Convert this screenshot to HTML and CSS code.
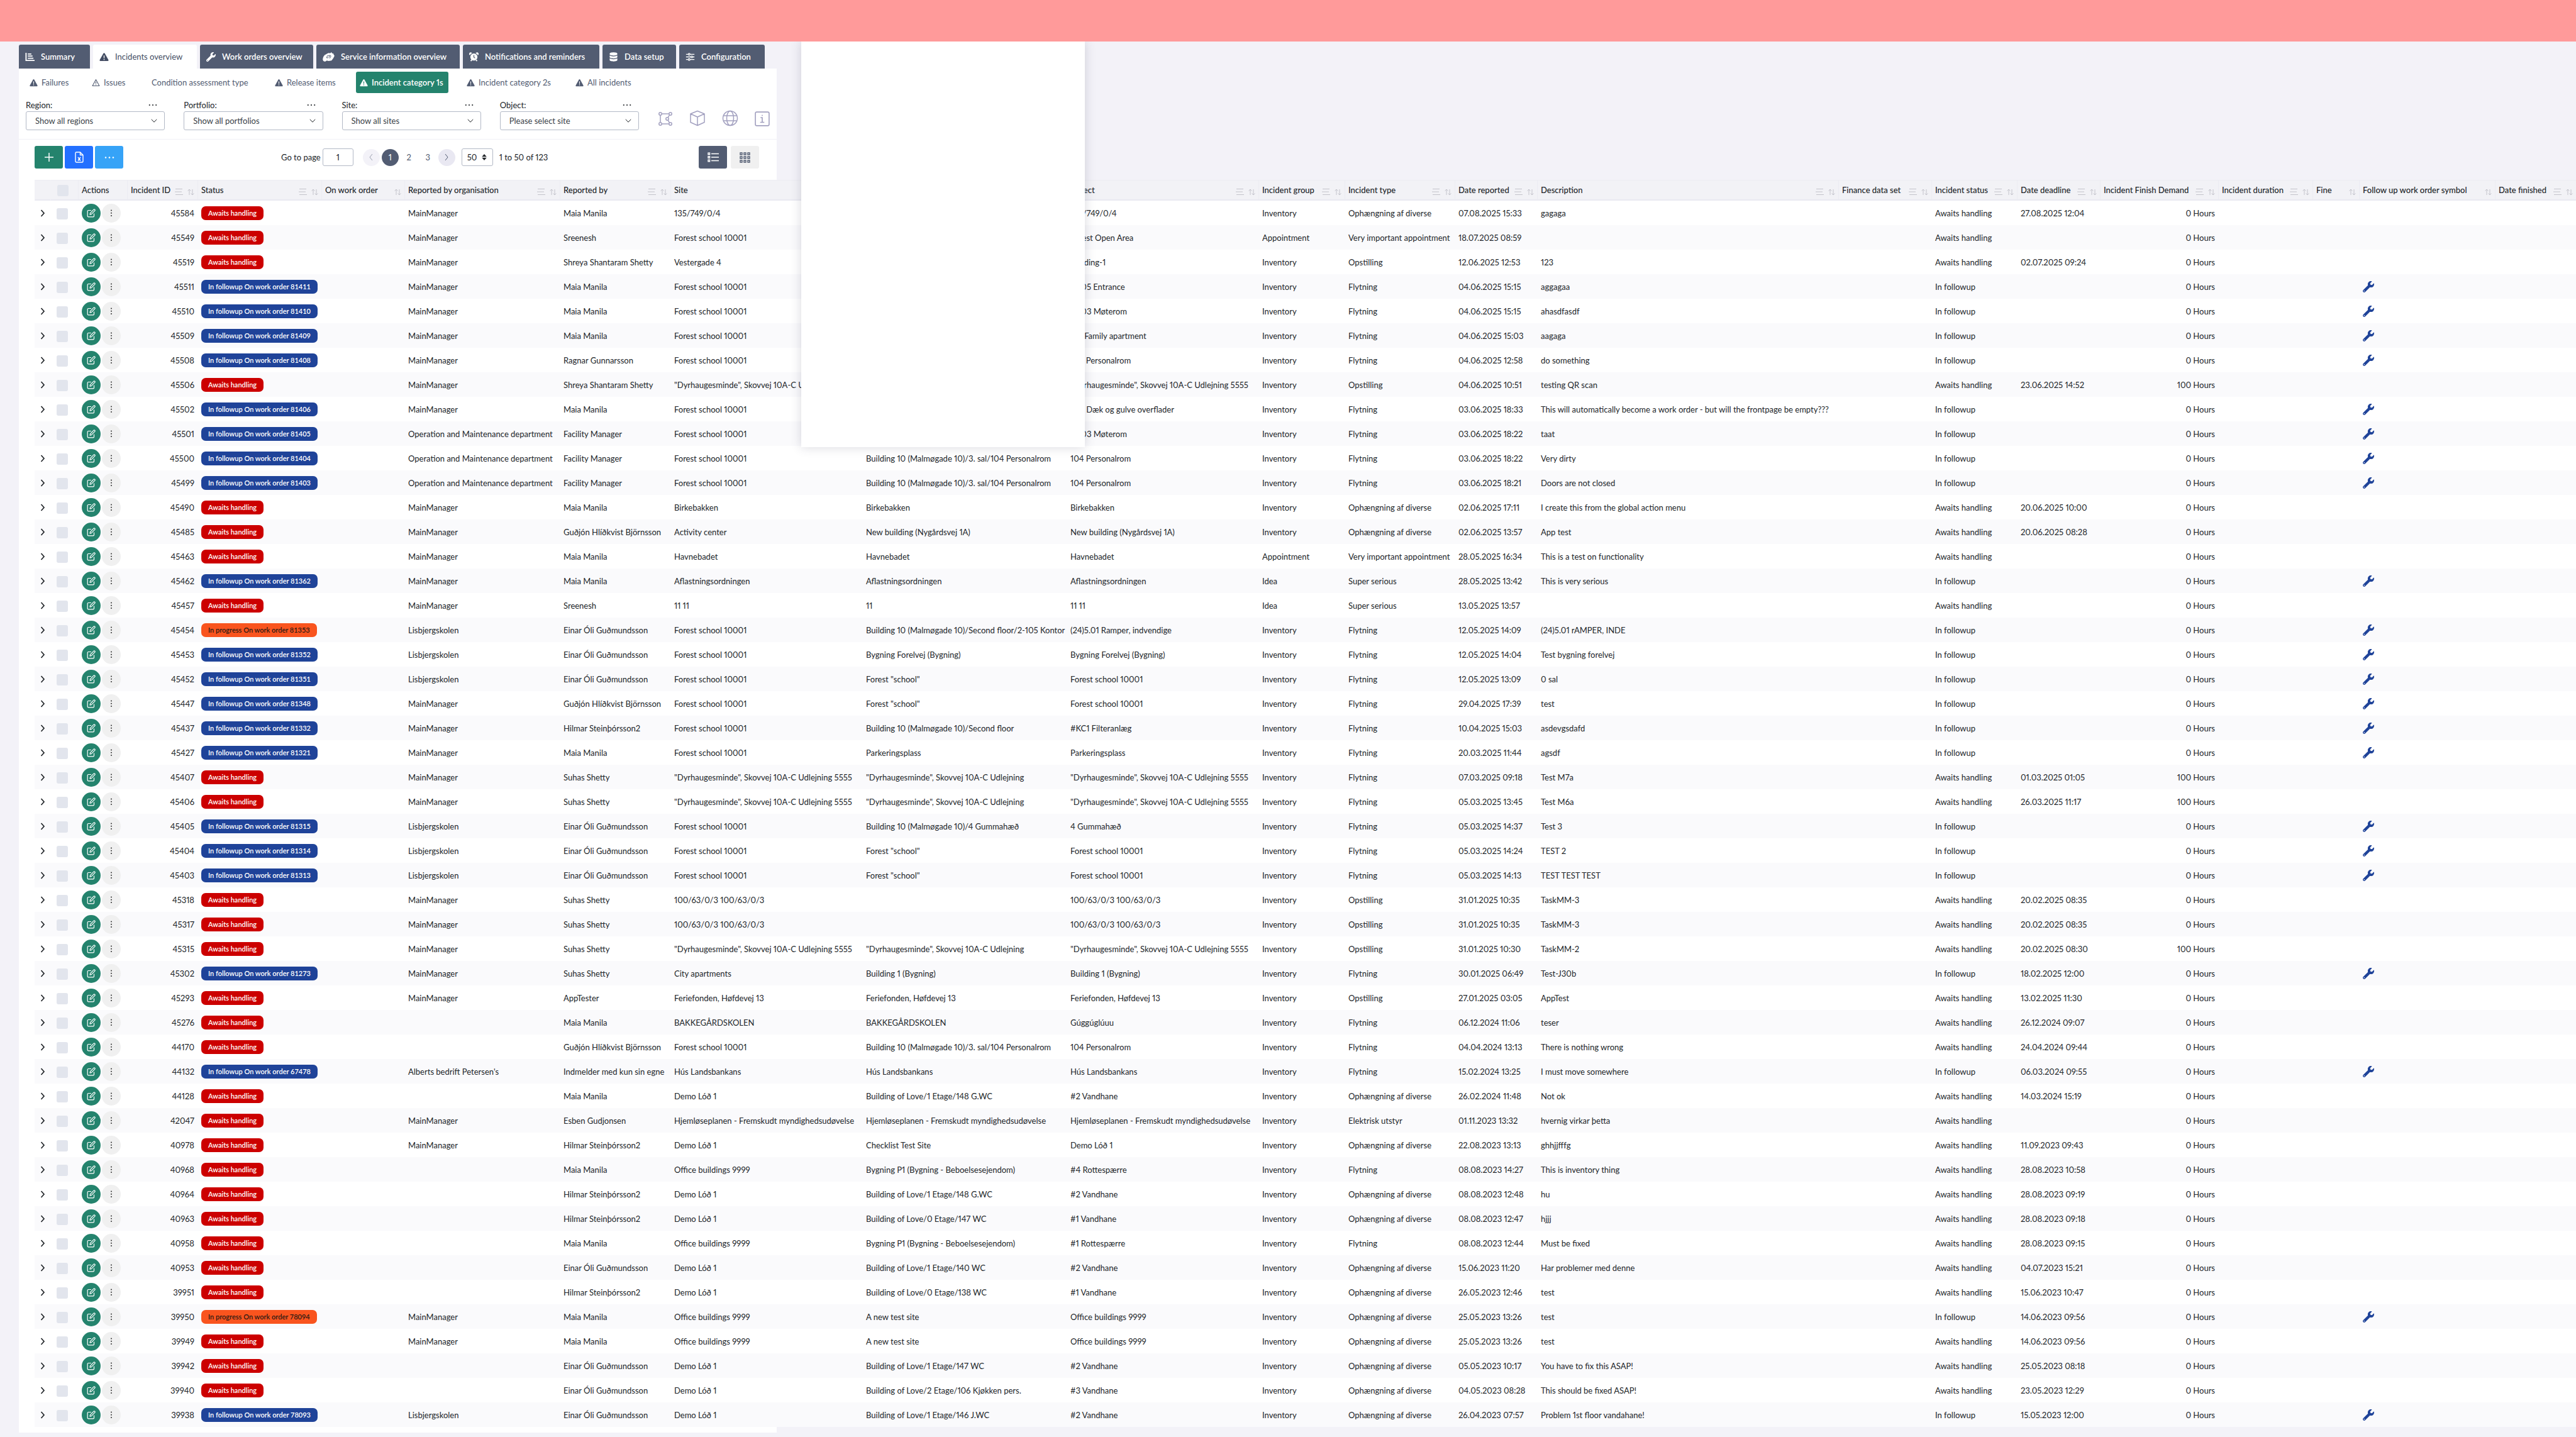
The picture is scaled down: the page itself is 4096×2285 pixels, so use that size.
FILE: index.html
```html
<!DOCTYPE html>
<html lang="en">
<head>
<meta charset="utf-8">
<title>Incidents overview</title>
<link rel="stylesheet" href="styles.css">
</head>
<body>
<svg class="sprite" aria-hidden="true">
  <symbol id="i-wrench" viewBox="0 0 512 512"><path fill="currentColor" d="M507.73 109.1c-2.24-9.03-13.54-12.09-20.12-5.51l-74.36 74.36-67.88-11.31-11.31-67.88 74.36-74.36c6.62-6.62 3.43-17.9-5.66-20.16-47.38-11.74-99.55.91-136.58 37.93-39.64 39.64-50.55 97.1-34.05 147.2L18.74 402.76c-24.99 24.99-24.99 65.51 0 90.5 24.99 24.99 65.51 24.99 90.5 0l213.21-213.21c50.12 16.71 107.47 5.68 147.37-34.22 37.07-37.07 49.7-89.32 37.91-136.73zM64 472c-13.25 0-24-10.75-24-24 0-13.26 10.75-24 24-24s24 10.74 24 24c0 13.25-10.75 24-24 24z"/></symbol>
  <symbol id="i-warn" viewBox="0 0 16 16"><path fill="currentColor" fill-rule="evenodd" d="M8 1.2c.5 0 .9.3 1.1.7l6.3 11.2c.5.9-.1 1.9-1.1 1.9H1.700C.7 15 .1 14 .6 13.100L6.900 1.900C7.100 1.500 7.500 1.200 8 1.200zM7.200 5.500l.2 5h1.200l.2-5zM8 11.400a.9.9 0 1 0 0 1.800.9.900 0 0 0 0-1.800z"/></symbol>
  <symbol id="i-warn-o" viewBox="0 0 16 16"><path fill="none" stroke="currentColor" stroke-width="1.300" stroke-linejoin="round" d="M8 2l6.700 12.200H1.300zM8 6.300v3.900M8 11.300v1.400"/></symbol>
  <symbol id="i-chart" viewBox="0 0 16 16"><path fill="none" stroke="currentColor" stroke-width="2" d="M1.500 1v13H16M4.500 3h6M4.500 6.500h8M4.500 10.200h9.500"/></symbol>
  <symbol id="i-service" viewBox="0 0 20 16"><path fill="currentColor" d="M8 2l3-1 1 1 3-2 1 2 2 0 .6 2L20 6l-2 4-3 4-5 1-3-1-3 2-3-1-1-3 1-4 2-3z"/><path fill="none" stroke="#525c72" stroke-width="1" d="M8 6h4l-1.500 3M8 6L6.500 9.500h3M12 4.500l2 2-2 4"/></symbol>
  <symbol id="i-alarm" viewBox="0 0 16 16"><path fill="currentColor" d="M8 2.200a6 6 0 1 1 0 12 6 6 0 0 1 0-12zM3.300.5a2.500 2.500 0 0 1 1.800.8L.9 5A2.600 2.600 0 0 1 3.300.5zM12.700.5a2.500 2.500 0 0 0-1.800.8L15.100 5a2.600 2.600 0 0 0-2.400-4.500zM2 14l2-2 1.500 1.300L3.300 15.800zM14 14l-2-2-1.500 1.300 2.200 2.500z"/><path fill="none" stroke="#525c72" stroke-width="1.300" d="M8 4.800v3.700l2 1.500"/></symbol>
  <symbol id="i-db" viewBox="0 0 16 16"><path fill="currentColor" d="M1.500 2.500C1.500 1 4.500.2 8 .2s6.500.8 6.500 2.300v1C14.500 5 11.500 5.800 8 5.800S1.500 5 1.500 3.500zM1.500 5.700C3 6.700 5.500 7.100 8 7.100s5-.4 6.500-1.400v2.600c0 1.500-3 2.300-6.500 2.300s-6.500-.8-6.500-2.300zM1.500 10.500c1.500 1 4 1.400 6.500 1.400s5-.4 6.500-1.400v2.800c0 1.500-3 2.300-6.500 2.300s-6.500-.8-6.500-2.300z"/></symbol>
  <symbol id="i-sliders" viewBox="0 0 18 16"><g fill="none" stroke="currentColor" stroke-width="1.600"><path d="M1 3h4M9 3h8M1 8h9M14 8h3M1 13h4M9 13h8"/><circle cx="7" cy="3" r="1.700"/><circle cx="12" cy="8" r="1.700"/><circle cx="7" cy="13" r="1.700"/></g></symbol>
  <symbol id="i-chevron" viewBox="0 0 10 6"><path fill="none" stroke="currentColor" d="M.8.8L5 5.200 9.200.8"/></symbol>
  <symbol id="i-dots" viewBox="0 0 14 4"><g fill="currentColor"><circle cx="1.800" cy="2" r="1.100"/><circle cx="7" cy="2" r="1.100"/><circle cx="12.200" cy="2" r="1.100"/></g></symbol>
  <symbol id="i-vdots" viewBox="0 0 4 12"><g fill="currentColor"><circle cx="2" cy="1.500" r="1"/><circle cx="2" cy="5.800" r="1"/><circle cx="2" cy="10.100" r="1"/></g></symbol>
  <symbol id="i-plan" viewBox="0 0 24 24"><g fill="none" stroke="currentColor" stroke-width="1.500"><circle cx="4" cy="4" r="2.200"/><circle cx="20" cy="4" r="2.200"/><circle cx="4" cy="20" r="2.200"/><circle cx="20" cy="20" r="2.200"/><circle cx="15" cy="12" r="2.200"/><path d="M6.200 4h11.600M6.200 20h11.600M4 6.200v11.600M18.500 5.800l-2.500 4.200M18.500 18.200l-2.500-4.200"/></g></symbol>
  <symbol id="i-cube" viewBox="0 0 26 26"><path fill="none" stroke="currentColor" stroke-width="1.500" stroke-linejoin="round" d="M13 1.500l11 4.500v13.500l-11 5-11-5V6zM2 6l11 5 11-5M13 11v13.500"/></symbol>
  <symbol id="i-globe" viewBox="0 0 26 26"><g fill="none" stroke="currentColor" stroke-width="1.500"><circle cx="13" cy="13" r="11.500"/><ellipse cx="13" cy="13" rx="5.500" ry="11.500"/><path d="M2.500 9h21M2.500 17h21"/></g></symbol>
  <symbol id="i-info" viewBox="0 0 22 22"><rect x="1" y="1" width="20" height="20" rx="2" fill="none" stroke="currentColor" stroke-width="1.500"/><path fill="none" stroke="currentColor" stroke-width="1.500" d="M8.500 9.200H11v6.300M8 16h6M10.200 6h1.600"/></symbol>
  <symbol id="i-plus" viewBox="0 0 16 16"><path fill="none" stroke="currentColor" stroke-width="1.500" d="M8 1v14M1 8h14"/></symbol>
  <symbol id="i-excel" viewBox="0 0 14 18"><path fill="none" stroke="currentColor" stroke-width="1.400" stroke-linejoin="round" d="M2.500 1h6L13 5.500V15.500a1.500 1.500 0 0 1-1.500 1.500h-9A1.500 1.500 0 0 1 1 15.500v-13A1.500 1.500 0 0 1 2.500 1zM8.500 1v4.500H13M5 9l4 5.500M9 9l-4 5.500"/></symbol>
  <symbol id="i-left" viewBox="0 0 6 12"><path fill="none" stroke="currentColor" d="M5 1L1 6l4 5"/></symbol>
  <symbol id="i-right" viewBox="0 0 6 12"><path fill="none" stroke="currentColor" d="M1 1l4 5-4 5"/></symbol>
  <symbol id="i-updown" viewBox="0 0 8 10"><path fill="currentColor" d="M4 0l3.800 4.200H.2zM4 10L.2 5.800h7.600z"/></symbol>
  <symbol id="i-list" viewBox="0 0 18 16"><g fill="none" stroke="currentColor" stroke-width="1.400"><path d="M6 2.500h12M6 8h12M6 13.500h12"/><path d="M1 1.200h2.600v2.600H1zM1 6.700h2.600v2.600H1zM1 12.200h2.600v2.600H1z"/></g></symbol>
  <symbol id="i-grid" viewBox="0 0 17 17"><path fill="none" stroke="currentColor" stroke-width="1.400" d="M1 1h3v3H1zM7 1h3v3H7zM13 1h3v3h-3zM1 7h3v3H1zM7 7h3v3H7zM13 7h3v3h-3zM1 13h3v3H1zM7 13h3v3H7zM13 13h3v3h-3z"/></symbol>
  <symbol id="i-filter" viewBox="0 0 13 10"><path fill="none" stroke="currentColor" d="M1 .5h11M0 5h11M1 9.500h12"/></symbol>
  <symbol id="i-sort" viewBox="0 0 11 11"><path fill="none" stroke="currentColor" d="M3 10V1M.6 3.500L3 1l2.400 2.500M8 1v9M5.600 7.500L8 10l2.400-2.500"/></symbol>
  <symbol id="i-expand" viewBox="0 0 8 12"><path fill="none" stroke="currentColor" stroke-width="1.700" d="M1.500 1l4.500 5-4.500 5"/></symbol>
  <symbol id="i-edit" viewBox="0 0 14 14"><path fill="none" stroke="currentColor" stroke-width="1.200" stroke-linejoin="round" d="M7 2.500H2.500A1.300 1.300 0 0 0 1.200 3.800v7.700a1.300 1.300 0 0 0 1.300 1.300h7.700a1.300 1.300 0 0 0 1.300-1.300V7.500M5 9.200l.5-2.300 5.300-5.600a1.300 1.300 0 0 1 1.900 1.800L7.300 8.700z"/></symbol>
</svg>

<div class="banner"></div>

<main class="page">
  <nav class="tabs">
    <a class="tab" href="#"><svg class="icon"><use href="#i-chart"/></svg>Summary</a>
    <a class="tab tab-active" href="#"><svg class="icon"><use href="#i-warn"/></svg>Incidents overview</a>
    <a class="tab" href="#"><svg class="icon"><use href="#i-wrench"/></svg>Work orders overview</a>
    <a class="tab" href="#"><svg class="icon icon-wide"><use href="#i-service"/></svg>Service information overview</a>
    <a class="tab" href="#"><svg class="icon"><use href="#i-alarm"/></svg>Notifications and reminders</a>
    <a class="tab" href="#"><svg class="icon"><use href="#i-db"/></svg>Data setup</a>
    <a class="tab" href="#"><svg class="icon"><use href="#i-sliders"/></svg>Configuration</a>
  </nav>

  <div class="panel">
    <nav class="subtabs">
      <a class="subtab" href="#"><svg><use href="#i-warn"/></svg>Failures</a>
      <a class="subtab" href="#"><svg><use href="#i-warn-o"/></svg>Issues</a>
      <a class="subtab" href="#">Condition assessment type</a>
      <a class="subtab" href="#"><svg><use href="#i-warn"/></svg>Release items</a>
      <a class="subtab subtab-active" href="#"><svg><use href="#i-warn"/></svg>Incident category 1s</a>
      <a class="subtab" href="#"><svg><use href="#i-warn"/></svg>Incident category 2s</a>
      <a class="subtab" href="#"><svg><use href="#i-warn"/></svg>All incidents</a>
    </nav>

    <div class="filters">
      <div class="filter">
        <div class="filter-head"><label for="region">Region:</label><button class="more" aria-label="More"><svg><use href="#i-dots"/></svg></button></div>
        <div class="select"><select id="region"><option>Show all regions</option></select><svg><use href="#i-chevron"/></svg></div>
      </div>
      <div class="filter">
        <div class="filter-head"><label for="portfolio">Portfolio:</label><button class="more" aria-label="More"><svg><use href="#i-dots"/></svg></button></div>
        <div class="select"><select id="portfolio"><option>Show all portfolios</option></select><svg><use href="#i-chevron"/></svg></div>
      </div>
      <div class="filter">
        <div class="filter-head"><label for="site">Site:</label><button class="more" aria-label="More"><svg><use href="#i-dots"/></svg></button></div>
        <div class="select"><select id="site"><option>Show all sites</option></select><svg><use href="#i-chevron"/></svg></div>
      </div>
      <div class="filter">
        <div class="filter-head"><label for="object">Object:</label><button class="more" aria-label="More"><svg><use href="#i-dots"/></svg></button></div>
        <div class="select"><select id="object"><option>Please select site</option></select><svg><use href="#i-chevron"/></svg></div>
      </div>
      <div class="views">
        <button aria-label="Floor plan"><svg><use href="#i-plan"/></svg></button>
        <button aria-label="Model"><svg><use href="#i-cube"/></svg></button>
        <button aria-label="Map"><svg><use href="#i-globe"/></svg></button>
        <button aria-label="Information"><svg><use href="#i-info"/></svg></button>
      </div>
    </div>

    <div class="toolbar">
      <div class="actions">
        <button class="btn btn-add" aria-label="Add"><svg><use href="#i-plus"/></svg></button>
        <button class="btn btn-excel" aria-label="Export"><svg><use href="#i-excel"/></svg></button>
        <button class="btn btn-more" aria-label="More"><svg><use href="#i-dots"/></svg></button>
      </div>
      <div class="pager">
        <label for="goto">Go to page</label>
        <input id="goto" type="text" value="1">
        <button class="page-btn page-prev" aria-label="Previous"><svg><use href="#i-left"/></svg></button>
        <button class="page-btn page-current">1</button>
        <button class="page-btn">2</button>
        <button class="page-btn">3</button>
        <button class="page-btn page-next" aria-label="Next"><svg><use href="#i-right"/></svg></button>
        <div class="size"><select aria-label="Rows per page"><option>50</option></select><svg><use href="#i-updown"/></svg></div>
        <span>1 to 50 of 123</span>
      </div>
      <div class="modes">
        <button class="btn btn-list" aria-label="List"><svg><use href="#i-list"/></svg></button>
        <button class="btn btn-grid" aria-label="Grid"><svg><use href="#i-grid"/></svg></button>
      </div>
    </div>

    <table class="incidents">
      <colgroup>
        <col class="c-expand"><col class="c-check"><col class="c-actions"><col class="c-id"><col class="c-status"><col class="c-order"><col class="c-org"><col class="c-by"><col class="c-site"><col class="c-location"><col class="c-object"><col class="c-group"><col class="c-type"><col class="c-reported"><col class="c-desc"><col class="c-finance"><col class="c-state"><col class="c-deadline"><col class="c-demand"><col class="c-duration"><col class="c-fine"><col class="c-symbol"><col class="c-finished">
      </colgroup>
      <thead><tr id="head"></tr></thead>
      <tbody id="rows"></tbody>
    </table>
  </div>
</main>

<div class="popup"></div>
<script src="app.js"></script>
</body>
</html>
```

FILE: styles.css
```css
* { box-sizing: border-box; }

body {
  margin: 0;
  min-height: 100vh;
  background: #f3f2f8;
  color: #212529;
  font: 13px/20px Lato, "Open Sans", sans-serif;
  font-variant-numeric: proportional-nums;
  overflow-x: hidden;
}

button, input, select { font: inherit; font-variant-numeric: inherit; color: inherit; margin: 0; }
button { border: 0; padding: 0; background: none; display: flex; align-items: center; justify-content: center; }
a { color: inherit; text-decoration: none; }
svg { display: block; flex: none; }
.sprite { position: absolute; width: 0; height: 0; }

.banner { height: 66px; background: #ff9a9a; position: relative; z-index: 3; }
.page { padding: 5px 0 0 30px; }

/* main tabs */
.tabs { display: grid; grid-template-columns: 113px 165px 180px 228px 217px 117px 136px; gap: 5px; }
.tab {
  display: flex; align-items: center; gap: 10px;
  height: 38px; padding-left: 10px;
  border-radius: 3px 3px 0 0;
  background: #525c72; color: #fff; font-weight: 600; white-space: nowrap;
}
.tab-active { background: #fff; color: #434d63; font-weight: 400; }
.icon { width: 15px; height: 15px; }
.icon-wide { width: 19px; }

.panel { width: 1205px; padding-bottom: 9px; background: #fff; }

/* category tabs */
.subtabs { display: grid; grid-template-columns: 76px 72px 173px 112px 147px 150px 120px; gap: 23px; padding: 5px 0 0 11px; }
.subtab { display: flex; align-items: center; gap: 6px; height: 34px; padding-left: 6px; border-radius: 3px; color: #525c72; white-space: nowrap; }
.subtab svg { width: 13px; height: 13px; }
.subtab-active { background: #24836d; color: #fff; font-weight: 600; }

/* filters */
.filters { display: flex; gap: 30px; padding: 9px 11px 14px; border-bottom: 1px solid #f1f1f6; }
.filter { width: 223px; }
.filter-head { display: flex; justify-content: space-between; padding-right: 12px; height: 20px; }
.more svg { width: 14px; height: 4px; }
.select, .size { display: grid; align-items: center; }
.select > *, .size > * { grid-area: 1 / 1; }
.select select {
  appearance: none; width: 100%; height: 30px; padding: 0 14px;
  border: 1px solid #b3b9c6; border-radius: 3px; background: #fff; color: #3a3f47;
}
.select svg { width: 10px; height: 6px; justify-self: end; margin-right: 12px; pointer-events: none; }
.views { display: flex; align-items: end; gap: 26px; padding-bottom: 6px; color: #a3a1c0; }
.views svg { width: 26px; height: 26px; }
.views button:first-child svg, .views button:last-child svg { width: 24px; height: 24px; }

/* toolbar */
.toolbar { display: flex; align-items: center; padding: 10px 28px 18px 25px; }
.actions { display: flex; gap: 3px; }
.modes { display: flex; gap: 6px; margin-left: auto; }
.btn { width: 45px; height: 36px; border-radius: 3px; color: #fff; }
.btn-add { background: #24836d; }
.btn-add svg { width: 16px; height: 16px; }
.btn-excel { background: #2370ff; }
.btn-excel svg { width: 14px; height: 18px; }
.btn-more { background: #36a3f7; }
.btn-more svg { width: 16px; height: 5px; }
.btn-list { background: #525c72; }
.btn-list svg { width: 18px; height: 16px; }
.btn-grid { background: #f0f0f0; color: #525c72; }
.btn-grid svg { width: 17px; height: 17px; }
.pager { display: flex; align-items: center; gap: 3px; margin-left: 251px; }
.pager input { width: 49px; height: 28px; margin-right: 12px; padding: 0; border: 1px solid #b3b9c6; border-radius: 3px; text-align: center; }
.page-btn { width: 27px; height: 27px; border-radius: 50%; color: #525c72; }
.page-btn svg { width: 6px; height: 12px; }
.page-prev { background: #f3f2f8; color: #9a9fae; }
.page-current { background: #525c72; color: #fff; }
.page-next { background: #e9e8f2; }
.size { margin: 0 7px; }
.size select { appearance: none; width: 50px; height: 28px; padding: 0 8px; border: 1px solid #b3b9c6; border-radius: 3px; background: #fff; }
.size svg { width: 8px; height: 10px; justify-self: end; margin-right: 10px; pointer-events: none; }

/* table */
.incidents {
  width: calc(100vw - 55px); margin-left: 25px;
  table-layout: fixed; border-collapse: separate; border-spacing: 0;
  font-size: 13px; line-height: 18px; font-variant-numeric: proportional-nums;
}
.c-expand { width: 25px; } .c-check { width: 44px; } .c-actions { width: 78px; } .c-id { width: 112px; }
.c-status { width: 197px; } .c-order { width: 132px; } .c-org { width: 247px; } .c-by { width: 176px; }
.c-site { width: 305px; } .c-location { width: 325px; } .c-object { width: 305px; } .c-group { width: 137px; }
.c-type { width: 175px; } .c-reported { width: 131px; } .c-desc { width: 479px; } .c-finance { width: 148px; }
.c-state { width: 136px; } .c-deadline { width: 132px; } .c-demand { width: 188px; } .c-duration { width: 150px; }
.c-fine { width: 74px; } .c-symbol { width: 216px; } .c-finished { width: 129px; }

.incidents th {
  height: 33px; padding: 0 5px; text-align: left; font-weight: 500; white-space: nowrap;
  background: #f2f2f6; border-top: 1px solid #ededf3; border-bottom: 2px solid #e9e9f1; border-left: 1px solid #ececf2;
}
.incidents th:first-child, .incidents th:nth-child(2) { border-left-color: transparent; }
.th { display: flex; align-items: center; gap: 7px; }
.th span { flex: 1; }
.th svg { color: #c3c3cb; margin-top: 6px; }
.f-icon { width: 13px; height: 10px; }
.s-icon { width: 11px; height: 11px; }

.incidents td { height: 39px; padding: 0 5px 0 6px; background: #fff; white-space: nowrap; }
.incidents tr:nth-child(even) td { background: #fafafc; }
.incidents .num { text-align: right; }
.incidents .tick { padding-left: 10px; }
.expand { width: 14px; height: 24px; }
.expand svg { width: 8px; height: 12px; }
.incidents input[type="checkbox"] { appearance: none; display: block; width: 18px; height: 18px; margin: 2px 0 0; border-radius: 3px; background: #e2e5ed; }
.row-actions { display: flex; gap: 2px; }
.round { width: 30px; height: 30px; border-radius: 50%; background: #f0f0f0; color: #333; }
.round svg { width: 4px; height: 12px; }
.round-edit { background: #24836d; color: #fff; }
.round-edit svg { width: 14px; height: 14px; }
.badge { display: inline-block; height: 22px; padding: 0 11px; border-radius: 7px; font-size: 11px; line-height: 22px; font-weight: 600; font-variant-numeric: tabular-nums; color: #fff; vertical-align: middle; }
.badge-A { background: #c00; }
.badge-F { background: #1f4399; }
.badge-P { background: #f9541e; color: #2b1a14; }
.tool { width: 18px; height: 18px; color: #1f4399; }

.popup {
  position: absolute; z-index: 2; top: 66px; left: 1274px; width: 451px; height: 645px;
  background: #fff; box-shadow: 0 0 16px rgba(60, 60, 90, .2);
}
```

FILE: app.js
```js
// [title, has filter icon, has sort icon]
const columns = [
  ["", 0, 0], ["check", 0, 0], ["Actions", 0, 0], ["Incident ID", 1, 1], ["Status", 1, 1], ["On work order", 0, 1],
  ["Reported by organisation", 1, 1], ["Reported by", 1, 1], ["Site", 0, 0], ["", 0, 0], ["Object", 1, 1],
  ["Incident group", 1, 1], ["Incident type", 1, 1], ["Date reported", 1, 1], ["Description", 1, 1],
  ["Finance data set", 1, 1], ["Incident status", 1, 1], ["Date deadline", 1, 1], ["Incident Finish Demand", 1, 1],
  ["Incident duration", 1, 1], ["Fine", 0, 1], ["Follow up work order symbol", 0, 1], ["Date finished", 1, 1]
];

// id | status + work order | organisation | reporter | site | location | object | group | type | reported | description | deadline | hours
const data = `
45584|A|MainManager|Maia Manila|135/749/0/4||135/749/0/4|Inventory|Ophængning af diverse|07.08.2025 15:33|gagaga|27.08.2025 12:04|0
45549|A|MainManager|Sreenesh|Forest school 10001||Forest Open Area|Appointment|Very important appointment|18.07.2025 08:59|||0
45519|A|MainManager|Shreya Shantaram Shetty|Vestergade 4||Building-1|Inventory|Opstilling|12.06.2025 12:53|123|02.07.2025 09:24|0
45511|F81411|MainManager|Maia Manila|Forest school 10001||2-105 Entrance|Inventory|Flytning|04.06.2025 15:15|aggagaa||0
45510|F81410|MainManager|Maia Manila|Forest school 10001||2-103 Møterom|Inventory|Flytning|04.06.2025 15:15|ahasdfasdf||0
45509|F81409|MainManager|Maia Manila|Forest school 10001||101 Family apartment|Inventory|Flytning|04.06.2025 15:03|aagaga||0
45508|F81408|MainManager|Ragnar Gunnarsson|Forest school 10001||104 Personalrom|Inventory|Flytning|04.06.2025 12:58|do something||0
45506|A|MainManager|Shreya Shantaram Shetty|"Dyrhaugesminde", Skovvej 10A-C Udlejning 5555||"Dyrhaugesminde", Skovvej 10A-C Udlejning 5555|Inventory|Opstilling|04.06.2025 10:51|testing QR scan|23.06.2025 14:52|100
45502|F81406|MainManager|Maia Manila|Forest school 10001||(43) Dæk og gulve overflader|Inventory|Flytning|03.06.2025 18:33|This will automatically become a work order - but will the frontpage be empty???||0
45501|F81405|Operation and Maintenance department|Facility Manager|Forest school 10001||2-103 Møterom|Inventory|Flytning|03.06.2025 18:22|taat||0
45500|F81404|Operation and Maintenance department|Facility Manager|Forest school 10001|Building 10 (Malmøgade 10)/3. sal/104 Personalrom|104 Personalrom|Inventory|Flytning|03.06.2025 18:22|Very dirty||0
45499|F81403|Operation and Maintenance department|Facility Manager|Forest school 10001|Building 10 (Malmøgade 10)/3. sal/104 Personalrom|104 Personalrom|Inventory|Flytning|03.06.2025 18:21|Doors are not closed||0
45490|A|MainManager|Maia Manila|Birkebakken|Birkebakken|Birkebakken|Inventory|Ophængning af diverse|02.06.2025 17:11|I create this from the global action menu|20.06.2025 10:00|0
45485|A|MainManager|Guðjón Hlíðkvist Björnsson|Activity center|New building (Nygårdsvej 1A)|New building (Nygårdsvej 1A)|Inventory|Ophængning af diverse|02.06.2025 13:57|App test|20.06.2025 08:28|0
45463|A|MainManager|Maia Manila|Havnebadet|Havnebadet|Havnebadet|Appointment|Very important appointment|28.05.2025 16:34|This is a test on functionality||0
45462|F81362|MainManager|Maia Manila|Aflastningsordningen|Aflastningsordningen|Aflastningsordningen|Idea|Super serious|28.05.2025 13:42|This is very serious||0
45457|A|MainManager|Sreenesh|11 11|11|11 11|Idea|Super serious|13.05.2025 13:57|||0
45454|P81353|Lisbjergskolen|Einar Óli Guðmundsson|Forest school 10001|Building 10 (Malmøgade 10)/Second floor/2-105 Kontor|(24)5.01 Ramper, indvendige|Inventory|Flytning|12.05.2025 14:09|(24)5.01 rAMPER, INDE||0
45453|F81352|Lisbjergskolen|Einar Óli Guðmundsson|Forest school 10001|Bygning Forelvej (Bygning)|Bygning Forelvej (Bygning)|Inventory|Flytning|12.05.2025 14:04|Test bygning forelvej||0
45452|F81351|Lisbjergskolen|Einar Óli Guðmundsson|Forest school 10001|Forest "school"|Forest school 10001|Inventory|Flytning|12.05.2025 13:09|0 sal||0
45447|F81348|MainManager|Guðjón Hlíðkvist Björnsson|Forest school 10001|Forest "school"|Forest school 10001|Inventory|Flytning|29.04.2025 17:39|test||0
45437|F81332|MainManager|Hilmar Steinþórsson2|Forest school 10001|Building 10 (Malmøgade 10)/Second floor|#KC1 Filteranlæg|Inventory|Flytning|10.04.2025 15:03|asdevgsdafd||0
45427|F81321|MainManager|Maia Manila|Forest school 10001|Parkeringsplass|Parkeringsplass|Inventory|Flytning|20.03.2025 11:44|agsdf||0
45407|A|MainManager|Suhas Shetty|"Dyrhaugesminde", Skovvej 10A-C Udlejning 5555|"Dyrhaugesminde", Skovvej 10A-C Udlejning|"Dyrhaugesminde", Skovvej 10A-C Udlejning 5555|Inventory|Flytning|07.03.2025 09:18|Test M7a|01.03.2025 01:05|100
45406|A|MainManager|Suhas Shetty|"Dyrhaugesminde", Skovvej 10A-C Udlejning 5555|"Dyrhaugesminde", Skovvej 10A-C Udlejning|"Dyrhaugesminde", Skovvej 10A-C Udlejning 5555|Inventory|Flytning|05.03.2025 13:45|Test M6a|26.03.2025 11:17|100
45405|F81315|Lisbjergskolen|Einar Óli Guðmundsson|Forest school 10001|Building 10 (Malmøgade 10)/4 Gummahæð|4 Gummahæð|Inventory|Flytning|05.03.2025 14:37|Test 3||0
45404|F81314|Lisbjergskolen|Einar Óli Guðmundsson|Forest school 10001|Forest "school"|Forest school 10001|Inventory|Flytning|05.03.2025 14:24|TEST 2||0
45403|F81313|Lisbjergskolen|Einar Óli Guðmundsson|Forest school 10001|Forest "school"|Forest school 10001|Inventory|Flytning|05.03.2025 14:13|TEST TEST TEST||0
45318|A|MainManager|Suhas Shetty|100/63/0/3 100/63/0/3||100/63/0/3 100/63/0/3|Inventory|Opstilling|31.01.2025 10:35|TaskMM-3|20.02.2025 08:35|0
45317|A|MainManager|Suhas Shetty|100/63/0/3 100/63/0/3||100/63/0/3 100/63/0/3|Inventory|Opstilling|31.01.2025 10:35|TaskMM-3|20.02.2025 08:35|0
45315|A|MainManager|Suhas Shetty|"Dyrhaugesminde", Skovvej 10A-C Udlejning 5555|"Dyrhaugesminde", Skovvej 10A-C Udlejning|"Dyrhaugesminde", Skovvej 10A-C Udlejning 5555|Inventory|Opstilling|31.01.2025 10:30|TaskMM-2|20.02.2025 08:30|100
45302|F81273|MainManager|Suhas Shetty|City apartments|Building 1 (Bygning)|Building 1 (Bygning)|Inventory|Flytning|30.01.2025 06:49|Test-J30b|18.02.2025 12:00|0
45293|A|MainManager|AppTester|Feriefonden, Høfdevej 13|Feriefonden, Høfdevej 13|Feriefonden, Høfdevej 13|Inventory|Opstilling|27.01.2025 03:05|AppTest|13.02.2025 11:30|0
45276|A||Maia Manila|BAKKEGÅRDSKOLEN|BAKKEGÅRDSKOLEN|Gúggúglúuu|Inventory|Flytning|06.12.2024 11:06|teser|26.12.2024 09:07|0
44170|A||Guðjón Hlíðkvist Björnsson|Forest school 10001|Building 10 (Malmøgade 10)/3. sal/104 Personalrom|104 Personalrom|Inventory|Flytning|04.04.2024 13:13|There is nothing wrong|24.04.2024 09:44|0
44132|F67478|Alberts bedrift Petersen's|Indmelder med kun sin egne|Hús Landsbankans|Hús Landsbankans|Hús Landsbankans|Inventory|Flytning|15.02.2024 13:25|I must move somewhere|06.03.2024 09:55|0
44128|A||Maia Manila|Demo Lóð 1|Building of Love/1 Etage/148 G.WC|#2 Vandhane|Inventory|Ophængning af diverse|26.02.2024 11:48|Not ok|14.03.2024 15:19|0
42047|A|MainManager|Esben Gudjonsen|Hjemløseplanen - Fremskudt myndighedsudøvelse|Hjemløseplanen - Fremskudt myndighedsudøvelse|Hjemløseplanen - Fremskudt myndighedsudøvelse|Inventory|Elektrisk utstyr|01.11.2023 13:32|hvernig virkar þetta||0
40978|A|MainManager|Hilmar Steinþórsson2|Demo Lóð 1|Checklist Test Site|Demo Lóð 1|Inventory|Ophængning af diverse|22.08.2023 13:13|ghhjjfffg|11.09.2023 09:43|0
40968|A||Maia Manila|Office buildings 9999|Bygning P1 (Bygning - Beboelsesejendom)|#4 Rottespærre|Inventory|Flytning|08.08.2023 14:27|This is inventory thing|28.08.2023 10:58|0
40964|A||Hilmar Steinþórsson2|Demo Lóð 1|Building of Love/1 Etage/148 G.WC|#2 Vandhane|Inventory|Ophængning af diverse|08.08.2023 12:48|hu|28.08.2023 09:19|0
40963|A||Hilmar Steinþórsson2|Demo Lóð 1|Building of Love/0 Etage/147 WC|#1 Vandhane|Inventory|Ophængning af diverse|08.08.2023 12:47|hjjj|28.08.2023 09:18|0
40958|A||Maia Manila|Office buildings 9999|Bygning P1 (Bygning - Beboelsesejendom)|#1 Rottespærre|Inventory|Flytning|08.08.2023 12:44|Must be fixed|28.08.2023 09:15|0
40953|A||Einar Óli Guðmundsson|Demo Lóð 1|Building of Love/1 Etage/140 WC|#2 Vandhane|Inventory|Ophængning af diverse|15.06.2023 11:20|Har problemer med denne|04.07.2023 15:21|0
39951|A||Hilmar Steinþórsson2|Demo Lóð 1|Building of Love/0 Etage/138 WC|#1 Vandhane|Inventory|Ophængning af diverse|26.05.2023 12:46|test|15.06.2023 10:47|0
39950|P78094|MainManager|Maia Manila|Office buildings 9999|A new test site|Office buildings 9999|Inventory|Ophængning af diverse|25.05.2023 13:26|test|14.06.2023 09:56|0
39949|A|MainManager|Maia Manila|Office buildings 9999|A new test site|Office buildings 9999|Inventory|Ophængning af diverse|25.05.2023 13:26|test|14.06.2023 09:56|0
39942|A||Einar Óli Guðmundsson|Demo Lóð 1|Building of Love/1 Etage/147 WC|#2 Vandhane|Inventory|Ophængning af diverse|05.05.2023 10:17|You have to fix this ASAP!|25.05.2023 08:18|0
39940|A||Einar Óli Guðmundsson|Demo Lóð 1|Building of Love/2 Etage/106 Kjøkken pers.|#3 Vandhane|Inventory|Ophængning af diverse|04.05.2023 08:28|This should be fixed ASAP!|23.05.2023 12:29|0
39938|F78093|Lisbjergskolen|Einar Óli Guðmundsson|Demo Lóð 1|Building of Love/1 Etage/146 J.WC|#2 Vandhane|Inventory|Ophængning af diverse|26.04.2023 07:57|Problem 1st floor vandahane!|15.05.2023 12:00|0
`.trim().split("\n").map(line => line.split("|"));

const icon = (name, cls = "") => `<svg class="${cls}"><use href="#i-${name}"/></svg>`;

document.getElementById("head").innerHTML = columns.map(([title, filter, sort]) => {
  if (title === "check") return `<th class="tick"><input type="checkbox" aria-label="Select all"></th>`;
  return `<th><div class="th"><span>${title}</span>${filter ? icon("filter", "f-icon") : ""}${sort ? icon("sort", "s-icon") : ""}</div></th>`;
}).join("");

document.getElementById("rows").innerHTML = data.map(([id, status, org, by, site, location, object, group, type, reported, desc, deadline, hours]) => {
  const kind = status[0];
  const order = status.slice(1);
  const label = { A: "Awaits handling", F: `In followup On work order ${order}`, P: `In progress On work order ${order}` }[kind];
  return `<tr>
    <td><button class="expand" aria-label="Expand">${icon("expand")}</button></td>
    <td class="tick"><input type="checkbox" aria-label="Select ${id}"></td>
    <td><div class="row-actions"><button class="round round-edit" aria-label="Edit">${icon("edit")}</button><button class="round" aria-label="More">${icon("vdots")}</button></div></td>
    <td class="num">${id}</td>
    <td><span class="badge badge-${kind}">${label}</span></td>
    <td></td>
    <td>${org}</td><td>${by}</td><td>${site}</td><td>${location}</td><td>${object}</td>
    <td>${group}</td><td>${type}</td><td>${reported}</td><td>${desc}</td><td></td>
    <td>${kind === "A" ? "Awaits handling" : "In followup"}</td><td>${deadline}</td><td class="num">${hours} Hours</td>
    <td></td><td></td><td>${kind === "A" ? "" : icon("wrench", "tool")}</td><td></td>
  </tr>`;
}).join("");
```
